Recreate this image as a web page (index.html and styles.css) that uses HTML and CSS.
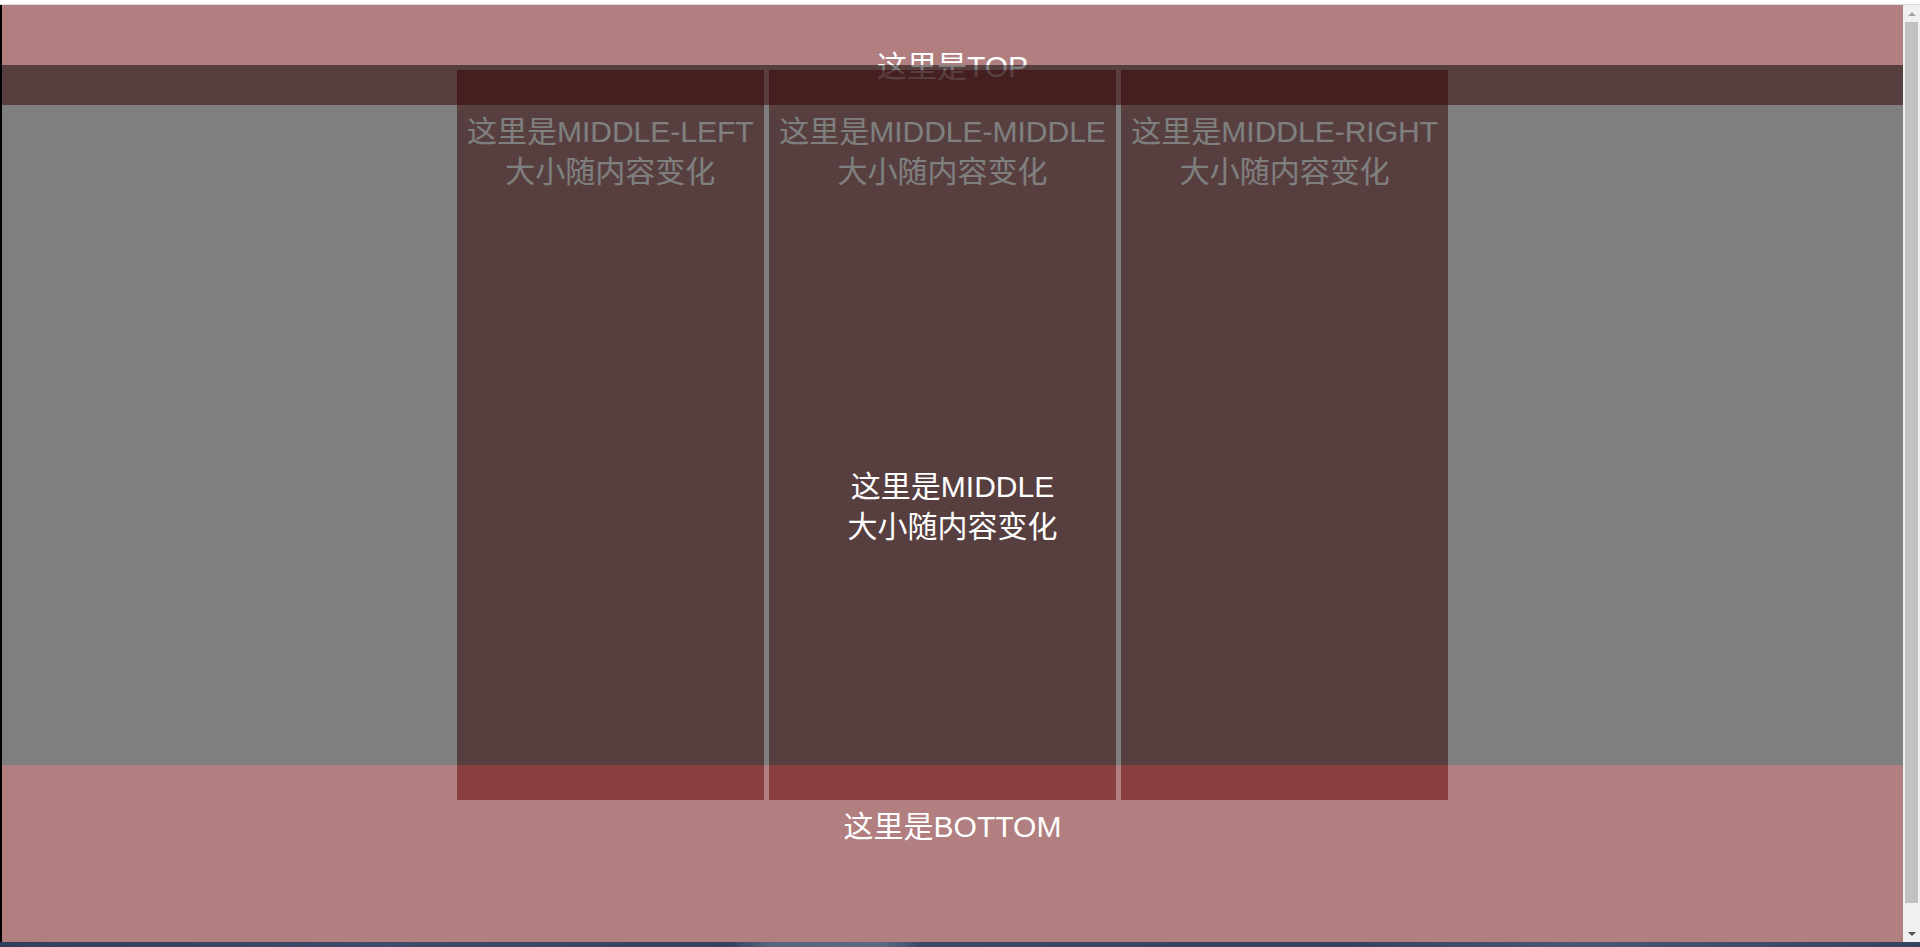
FILE: index.html
```html
<!DOCTYPE html>
<html lang="zh-CN">
<head>
<meta charset="utf-8">
<title>Layout</title>
<link rel="stylesheet" href="styles.css">
</head>
<body>
<div class="screen">
  <div class="chrome-top"></div>
  <div class="window">
    <div class="edge"></div>
    <div class="viewport">
      <div class="page">
        <div class="bar bar-top">这里是TOP</div>
        <div class="middle">
          <div class="cols">
            <div class="col">这里是MIDDLE-LEFT<br>大小随内容变化</div>
            <div class="col">这里是MIDDLE-MIDDLE<br>大小随内容变化</div>
            <div class="col">这里是MIDDLE-RIGHT<br>大小随内容变化</div>
          </div>
        </div>
        <div class="bar bar-bottom">这里是BOTTOM</div>
        <div class="mask">
          <div class="mask-text">这里是MIDDLE<br>大小随内容变化</div>
        </div>
      </div>
    </div>
    <div class="scrollbar">
      <div class="sb-btn"><span class="arrow-up"></span></div>
      <div class="sb-track"><div class="sb-thumb"></div></div>
      <div class="sb-btn"><span class="arrow-down"></span></div>
    </div>
  </div>
  <div class="chrome-bottom"></div>
</div>
</body>
</html>
```

FILE: styles.css
```css
html, body {
  margin: 0;
  padding: 0;
  background: #ffffff;
}

.screen {
  width: 1920px;
  height: 947px;
  display: flex;
  flex-direction: column;
  overflow: hidden;
  font-family: "Liberation Sans", "Noto Sans CJK SC", sans-serif;
}

.chrome-top {
  height: 4px;
  background: #ffffff;
  border-bottom: 1px solid #d9d9d9;
  flex: none;
}

.window {
  height: 937px;
  display: flex;
  flex: none;
}

.edge {
  width: 2px;
  background: #000000;
  flex: none;
}

.viewport {
  flex: 1;
  overflow: hidden;
  background: #ffffff;
}

.page {
  position: relative;
  color: #ffffff;
  font-size: 30px;
  line-height: 40px;
  text-align: center;
}

.bar {
  box-sizing: border-box;
  padding-top: 42px;
  background: rgba(100, 0, 0, 0.5);
}

.bar-top {
  height: 100px;
}

.bar-bottom {
  height: 200px;
}

.middle {
  height: 660px;
  display: flex;
  justify-content: center;
}

.cols {
  position: relative;
  z-index: 1;
  display: flex;
  gap: 5.5px;
  height: 730px;
  margin-top: -35px;
}

.col {
  box-sizing: border-box;
  padding: 42px 10px 0;
  background: rgba(100, 0, 0, 0.5);
  white-space: nowrap;
}

.mask {
  position: absolute;
  z-index: 2;
  top: 60px;
  left: 0;
  right: 0;
  height: 700px;
  background: rgba(0, 0, 0, 0.5);
}

.mask-text {
  padding-top: 402px;
}

.scrollbar {
  width: 17px;
  flex: none;
  background: #f0f0f0;
  display: flex;
  flex-direction: column;
}

.sb-btn {
  height: 17px;
  flex: none;
  display: flex;
  align-items: center;
  justify-content: center;
}

.arrow-up {
  width: 0;
  height: 0;
  border-left: 4px solid transparent;
  border-right: 4px solid transparent;
  border-bottom: 4px solid #a3a3a3;
}

.arrow-down {
  width: 0;
  height: 0;
  border-left: 4px solid transparent;
  border-right: 4px solid transparent;
  border-top: 4px solid #505050;
}

.sb-track {
  flex: 1;
}

.sb-thumb {
  height: 881px;
  margin: 0 2px;
  background: #c1c1c1;
}

.chrome-bottom {
  height: 5px;
  flex: none;
  background: linear-gradient(90deg, #2f3f5c 0%, #3c4c6a 20%, #34445f 38%, #56647e 40%, #5c6a84 46%, #3a4a66 48%, #34445f 70%, #485874 82%, #34445f 100%);
}
```
